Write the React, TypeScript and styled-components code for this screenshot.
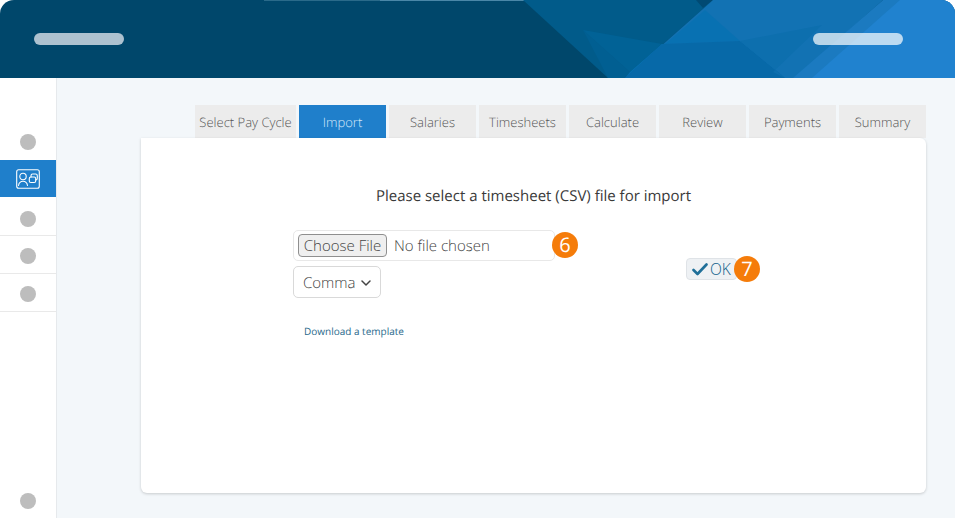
import React from "react";
import styled, { createGlobalStyle } from "styled-components";

const Global = createGlobalStyle`
  html, body { margin: 0; padding: 0; background: #fff; }
  body { font-family: "Open Sans", "Liberation Sans", sans-serif; text-rendering: geometricPrecision; }
  #root { width: 955px; height: 518px; overflow: hidden; }
`;

const Page = styled.div`
  width: 955px;
  height: 518px;
  display: flex;
  flex-direction: column;
  background: #fff;
`;

const Header = styled.header`
  position: relative;
  flex: 0 0 78px;
  display: flex;
  align-items: center;
  justify-content: space-between;
  padding: 0 52px 0 34px;
  background: #00476b;
  border-radius: 14px 14px 0 0;
  overflow: hidden;
`;

const HeaderArt = styled.svg`
  position: absolute;
  inset: 0;
  width: 955px;
  height: 78px;
`;

const Pill = styled.div<{ $right?: boolean }>`
  position: relative;
  width: 90px;
  height: 12px;
  border-radius: 6px;
  background: ${(p) => (p.$right ? "rgba(255,255,255,0.7)" : "#adc2d0")};
`;

const Body = styled.div`
  flex: 1;
  display: flex;
  min-height: 0;
`;

const Sidebar = styled.nav`
  flex: 0 0 56px;
  display: flex;
  flex-direction: column;
  padding-top: 45px;
  background: #fff;
  border-right: 1px solid #e6e9ec;
`;

const NavRow = styled.div<{ $active?: boolean; $h?: number; $pad?: number; $line?: boolean }>`
  height: ${(p) => p.$h ?? 38}px;
  padding-top: ${(p) => p.$pad ?? 0}px;
  box-sizing: border-box;
  display: flex;
  align-items: center;
  justify-content: center;
  background: ${(p) => (p.$active ? "#1f7fcb" : "transparent")};
  border-bottom: ${(p) => (p.$line ? "1px solid #e9e9e9" : "none")};
`;

const NavDot = styled.span`
  width: 16px;
  height: 16px;
  border-radius: 50%;
  background: #bdbdbd;
`;

const NavSpacer = styled.div`
  flex: 1;
`;

const BottomRow = styled.div`
  display: flex;
  justify-content: center;
  padding-bottom: 9px;
`;

const Main = styled.main`
  flex: 1;
  background: #f3f7fa;
  padding: 27px 29px 25px 84px;
  display: flex;
  flex-direction: column;
`;

const Tabs = styled.div`
  display: flex;
  gap: 3px;
  padding-left: 54px;
  height: 33px;
`;

const Tab = styled.div<{ $active?: boolean; $wide?: boolean }>`
  width: ${(p) => (p.$wide ? 101 : 87)}px;
  display: flex;
  align-items: center;
  justify-content: center;
  font-size: 13px;
  font-weight: 300;
  white-space: nowrap;
  background: ${(p) => (p.$active ? "#1f7fcb" : "#ececec")};
  color: ${(p) => (p.$active ? "#d6eafa" : "#555")};
`;

const Card = styled.section`
  flex: 1;
  background: #fff;
  border-radius: 0 6px 6px 6px;
  box-shadow: 0 1px 3px rgba(0, 0, 0, 0.18);
  display: flex;
  flex-direction: column;
  padding-top: 47px;
  box-sizing: border-box;
`;

const Title = styled.h2`
  margin: 0;
  font-size: 15px;
  font-weight: 400;
  line-height: 22px;
  color: #3a3a3a;
  text-align: center;
`;

const FormRow = styled.div`
  display: flex;
  margin-top: 23px;
  padding-left: 152px;
`;

const Fields = styled.div`
  width: 393px;
  display: flex;
  flex-direction: column;
  align-items: flex-start;
`;

const FileRow = styled.div`
  position: relative;
  width: 262px;
  height: 31px;
  box-sizing: border-box;
  display: flex;
  align-items: center;
  padding-left: 4px;
  border: 1px solid #e8e8e8;
  border-radius: 5px;
`;

const ChooseButton = styled.button`
  height: 23px;
  width: 89px;
  padding: 0 0 2px;
  box-sizing: border-box;
  font: 300 15px "Open Sans", sans-serif;
  color: #444;
  background: #efefef;
  border: 1px solid #8f8f8f;
  border-radius: 4px;
`;

const FileName = styled.span`
  margin-left: 7px;
  font-size: 15px;
  font-weight: 300;
  color: #444;
`;

const Badge = styled.span`
  position: absolute;
  width: 26px;
  height: 26px;
  border-radius: 50%;
  background: #f57c0a;
  color: #fff;
  font-size: 20px;
  font-weight: 500;
  line-height: 26px;
  text-align: center;
`;

const FileBadge = styled(Badge)`
  right: -24px;
  top: 1px;
`;

const SelectBox = styled.div`
  margin-top: 5px;
  width: 88px;
  height: 32px;
  box-sizing: border-box;
  display: flex;
  align-items: center;
  gap: 5px;
  padding: 2px 0 0 9px;
  border: 1px solid #d9d9d9;
  border-radius: 5px;
  font-size: 15px;
  font-weight: 300;
  color: #444;
`;

const TemplateLink = styled.a`
  margin: 26px 0 0 11px;
  font-size: 10px;
  line-height: 14px;
  color: #2a6a8c;
  text-decoration: none;
`;

const OkWrap = styled.div`
  position: relative;
  margin-top: 28px;
  align-self: flex-start;
`;

const OkButton = styled.button`
  width: 51px;
  height: 22px;
  padding: 0 0 0 5px;
  box-sizing: border-box;
  display: flex;
  align-items: center;
  gap: 2px;
  font: 300 15.5px "Open Sans", sans-serif;
  color: #0f5f8a;
  background: #eef1f4;
  border: 1px solid #dfe3e7;
  border-radius: 4px;
`;

const OkBadge = styled(Badge)`
  left: 48px;
  top: -2px;
`;

const IdIcon = () => (
  <svg width="24" height="20" viewBox="0 0 24 20" fill="none" stroke="#fff" strokeWidth="1.1" strokeLinecap="round" strokeLinejoin="round">
    <rect x="0.7" y="0.7" width="22.600" height="18.600" rx="2" />
    <circle cx="7" cy="7.500" r="3.200" />
    <path d="M2.500 16.500c.5-2.700 2.300-4.200 4.500-4.200s4 1.500 4.500 4.200" />
    <rect x="13.300" y="8" width="6.400" height="5.500" rx="1.500" />
    <path d="M15 8V6.700c0-1 .6-1.700 1.600-1.700h3c1 0 1.700.7 1.700 1.700v2.600c0 1-.7 1.700-1.600 1.700" />
  </svg>
);

const tabs = ["Import", "Salaries", "Timesheets", "Calculate", "Review", "Payments", "Summary"];

export default function App() {
  return (
    <Page>
      <Global />
      <Header>
        <HeaderArt viewBox="0 0 955 78">
          <rect x="264" y="0" width="116" height="1" fill="#2a6a8a" />
          <rect x="380" y="0" width="250" height="1" fill="#4a87a8" />
          <polygon points="523,0 713,0 625,78 608,78" fill="#015b8a" />
          <polygon points="583,30 608,78 625,78 630,72" fill="#015f92" />
          <polygon points="583,30 662,44 630,72" fill="#016296" />
          <polygon points="696,0 713,0 703,8" fill="#014a73" />
          <polygon points="713,0 883,0 795,78 625,78" fill="#1272b3" />
          <polygon points="705,10 740,41 662,44 630,72 625,78" fill="#0871b2" />
          <polygon points="662,44 740,41 778,72 785,78 625,78" fill="#0769a8" />
          <polygon points="740,41 822,25 773,72 785,78" fill="#0d6fae" />
          <polygon points="883,0 955,0 955,78 793,78" fill="#1b7ac0" />
          <polygon points="900,0 955,0 955,78 812,78" fill="#2082cf" />
        </HeaderArt>
        <Pill />
        <Pill $right />
      </Header>
      <Body>
        <Sidebar>
          <NavRow $h={37}><NavDot /></NavRow>
          <NavRow $active $h={37}><IdIcon /></NavRow>
          <NavRow $line $h={39} $pad={6}><NavDot /></NavRow>
          <NavRow $line $pad={3}><NavDot /></NavRow>
          <NavRow $line $pad={3}><NavDot /></NavRow>
          <NavSpacer />
          <BottomRow><NavDot /></BottomRow>
        </Sidebar>
        <Main>
          <Tabs>
            <Tab $wide>Select Pay Cycle</Tab>
            {tabs.map((t) => (
              <Tab key={t} $active={t === "Import"}>{t}</Tab>
            ))}
          </Tabs>
          <Card>
            <Title>Please select a timesheet (CSV) file for import</Title>
            <FormRow>
              <Fields>
                <FileRow>
                  <ChooseButton>Choose File</ChooseButton>
                  <FileName>No file chosen</FileName>
                  <FileBadge>6</FileBadge>
                </FileRow>
                <SelectBox>
                  Comma
                  <svg width="10" height="6" viewBox="0 0 10 6" fill="none" stroke="#444" strokeWidth="1.500" strokeLinecap="round" strokeLinejoin="round">
                    <path d="M1 1l4 4 4-4" />
                  </svg>
                </SelectBox>
                <TemplateLink href="#">Download a template</TemplateLink>
              </Fields>
              <OkWrap>
                <OkButton>
                  <svg width="16" height="13" viewBox="0 0 16 13" fill="none" stroke="#1f6f99" strokeWidth="2.600" strokeLinecap="round" strokeLinejoin="round">
                    <path d="M1.500 7l4 4 9-9.500" />
                  </svg>
                  OK
                </OkButton>
                <OkBadge>7</OkBadge>
              </OkWrap>
            </FormRow>
          </Card>
        </Main>
      </Body>
    </Page>
  );
}
